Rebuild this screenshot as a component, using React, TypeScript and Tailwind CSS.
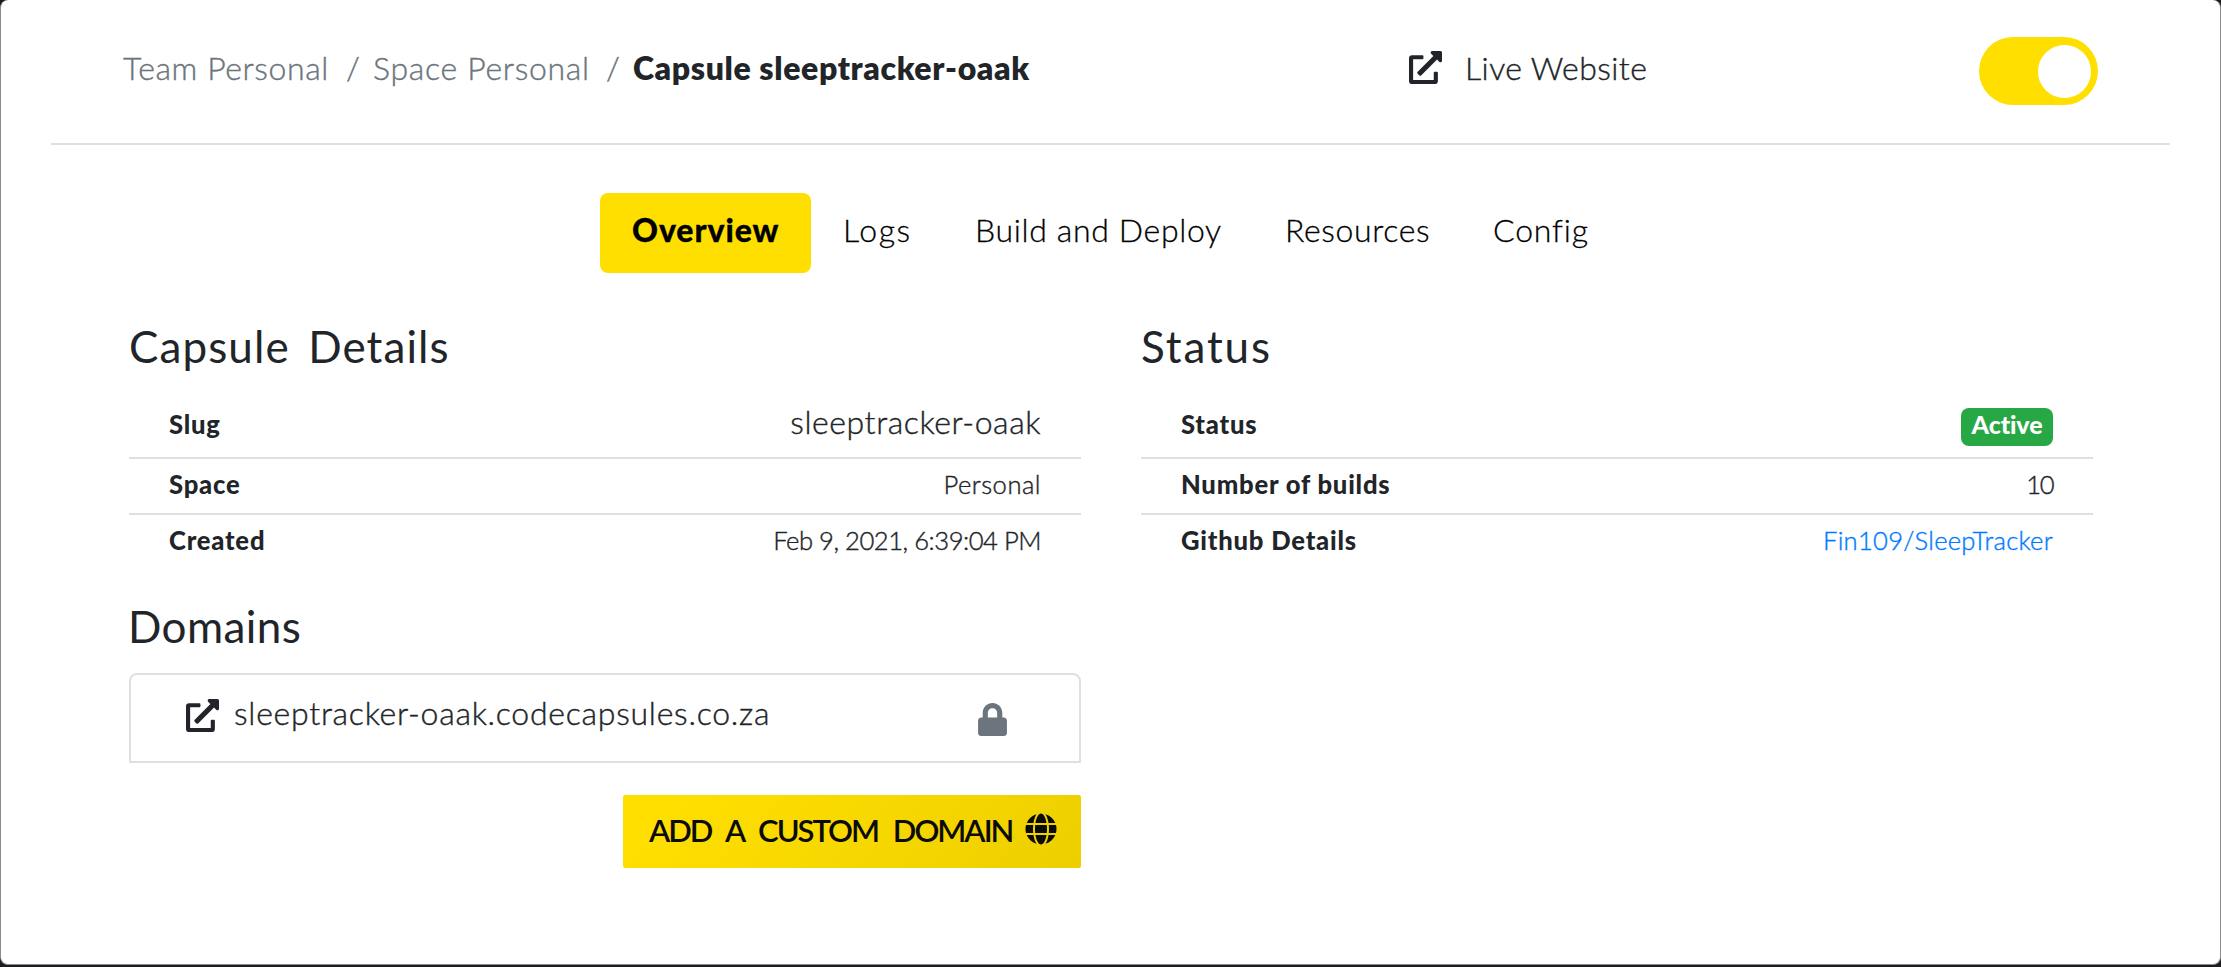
import { useState, type ReactNode } from "react";
import { FaExternalLinkAlt, FaGlobe, FaLock } from "react-icons/fa";

function Breadcrumbs() {
  return (
    <nav className="flex w-[1286px] pt-[43.5px] pl-[72px] text-[32px] leading-[48px] font-light text-[#6c757d]">
      <a className="w-[223px] tracking-[0.6px] [-webkit-text-stroke:0.4px]">Team Personal</a>
      <span className="w-[27px] [-webkit-text-stroke:0.4px]">/</span>
      <a className="w-[233px] tracking-[0.7px] [-webkit-text-stroke:0.4px]">Space Personal</a>
      <span className="w-[27px] [-webkit-text-stroke:0.4px]">/</span>
      <span className="font-extrabold tracking-[0.62px] text-[#212529]">Capsule sleeptracker-oaak</span>
    </nav>
  );
}

function Toggle() {
  const [on, setOn] = useState(true);
  return (
    <button
      role="switch"
      aria-checked={on}
      onClick={() => setOn(!on)}
      className={
        on
          ? "mt-[37px] flex h-[68px] w-[119px] items-center justify-end rounded-full bg-[#ffdf00] px-[7px]"
          : "mt-[37px] flex h-[68px] w-[119px] items-center justify-start rounded-full bg-[#cccccc] px-[7px]"
      }
    >
      <span className="size-[53px] rounded-full bg-white" />
    </button>
  );
}

function Header() {
  return (
    <header className="mx-[50px] flex h-[145px] items-start border-b-2 border-[#dfdfdf]">
      <Breadcrumbs />
      <a className="flex w-[642px] items-start pl-[72px]">
        <FaExternalLinkAlt className="mt-[51px] size-[33px] shrink-0" />
        <span className="pt-[43.5px] pl-[23px] text-[32px] leading-[48px] font-light tracking-[0.42px] [-webkit-text-stroke:0.4px]">
          Live Website
        </span>
      </a>
      <Toggle />
    </header>
  );
}

function Tabs() {
  return (
    <nav className="mt-12 flex h-20 pl-[599px] text-[32px] leading-[48px] font-light text-black [-webkit-text-stroke:0.3px]">
      <a className="w-[211px] rounded-lg bg-[#ffdf00] pt-[13px] pl-8 font-black tracking-[0.95px]">Overview</a>
      <a className="w-[132px] pt-[13px] pl-8 tracking-[1.6px]">Logs</a>
      <a className="w-[310px] pt-[13px] pl-8 tracking-[0.65px]">Build and Deploy</a>
      <a className="w-[209px] pt-[13px] pl-8 tracking-[0.62px]">Resources</a>
      <a className="pt-[13px] pl-[31px] tracking-[0.84px]">Config</a>
    </nav>
  );
}

function Row({ label, first, last, children }: { label: string; first?: string; last?: boolean; children: ReactNode }) {
  const size = first ?? "h-14 pt-[6px]";
  const line = last ? "" : "border-b-2 border-[#dfdfdf]";
  return (
    <div className={`flex items-baseline justify-between px-10 text-[25.6px] leading-[38px] font-light ${size} ${line}`}>
      <span className="font-black tracking-[0.8px]">{label}</span>
      {children}
    </div>
  );
}

export default function App() {
  return (
    <div className="h-[967px] w-[2221px] bg-[#1c1c1e] pb-[2px] font-['Lato',sans-serif] text-[#212529]">
      <div className="h-[965px] rounded-lg border-r border-b border-l border-[#8c8c8c] bg-white">
        <Header />
        <Tabs />
        <main className="mt-[46px] flex gap-[60px] pl-[128px]">
          <div className="w-[952px]">
            <h2 className="text-[44px] leading-[54px] font-normal tracking-[1.1px] [word-spacing:6px]">Capsule Details</h2>
            <Row label="Slug" first="h-[86px] pt-[30px]">
              <span className="text-[32px] tracking-[0.57px] [-webkit-text-stroke:0.4px]">sleeptracker-oaak</span>
            </Row>
            <Row label="Space">
              <span className="tracking-[0.5px] [-webkit-text-stroke:0.4px]">Personal</span>
            </Row>
            <Row label="Created" last>
              <span className="tracking-[-0.47px] [-webkit-text-stroke:0.4px]">Feb 9, 2021, 6:39:04 PM</span>
            </Row>
            <h2 className="-ml-px mt-7 text-[44px] leading-[54px] font-normal tracking-[0.4px]">Domains</h2>
            <div className="mt-[20px] flex h-[90px] items-start rounded-t-lg border-2 border-[#dfdfdf] pr-[72px] pl-[55px]">
              <FaExternalLinkAlt className="mt-6 size-[33px] shrink-0" />
              <span className="grow pt-[14px] pl-[15px] text-[32px] leading-[48px] font-light tracking-[0.74px] [-webkit-text-stroke:0.4px]">
                sleeptracker-oaak.codecapsules.co.za
              </span>
              <FaLock className="mt-7 h-[33px] w-[29px] text-[#6c757d]" />
            </div>
            <div className="mt-8 flex justify-end">
              <button className="flex h-[73px] w-[458px] items-start rounded-xs bg-linear-[135deg,#ffdf00_10%,#edcf00] pl-[26px] text-[#0b0b0b]">
                <span className="w-[376px] pt-[11px] text-left text-[31px] leading-[48px] font-semibold tracking-[-2px] whitespace-nowrap [word-spacing:9px]">
                  ADD A CUSTOM DOMAIN
                </span>
                <FaGlobe className="mt-[18px] h-8 w-8" />
              </button>
            </div>
          </div>
          <div className="w-[952px]">
            <h2 className="text-[44px] leading-[54px] font-normal tracking-[1.89px]">Status</h2>
            <Row label="Status" first="h-[86px] pt-8">
              <span className="h-[38px] w-[92px] rounded-lg bg-[#28a745] text-center text-[25px] leading-[32px] font-black tracking-[-0.1px] text-white">
                Active
              </span>
            </Row>
            <Row label="Number of builds">
              <span className="tracking-[-1.5px] [-webkit-text-stroke:0.4px]">10</span>
            </Row>
            <Row label="Github Details" last>
              <a className="tracking-[0.25px] text-[#007bff] [-webkit-text-stroke:0.4px]">Fin109/SleepTracker</a>
            </Row>
          </div>
        </main>
      </div>
    </div>
  );
}
